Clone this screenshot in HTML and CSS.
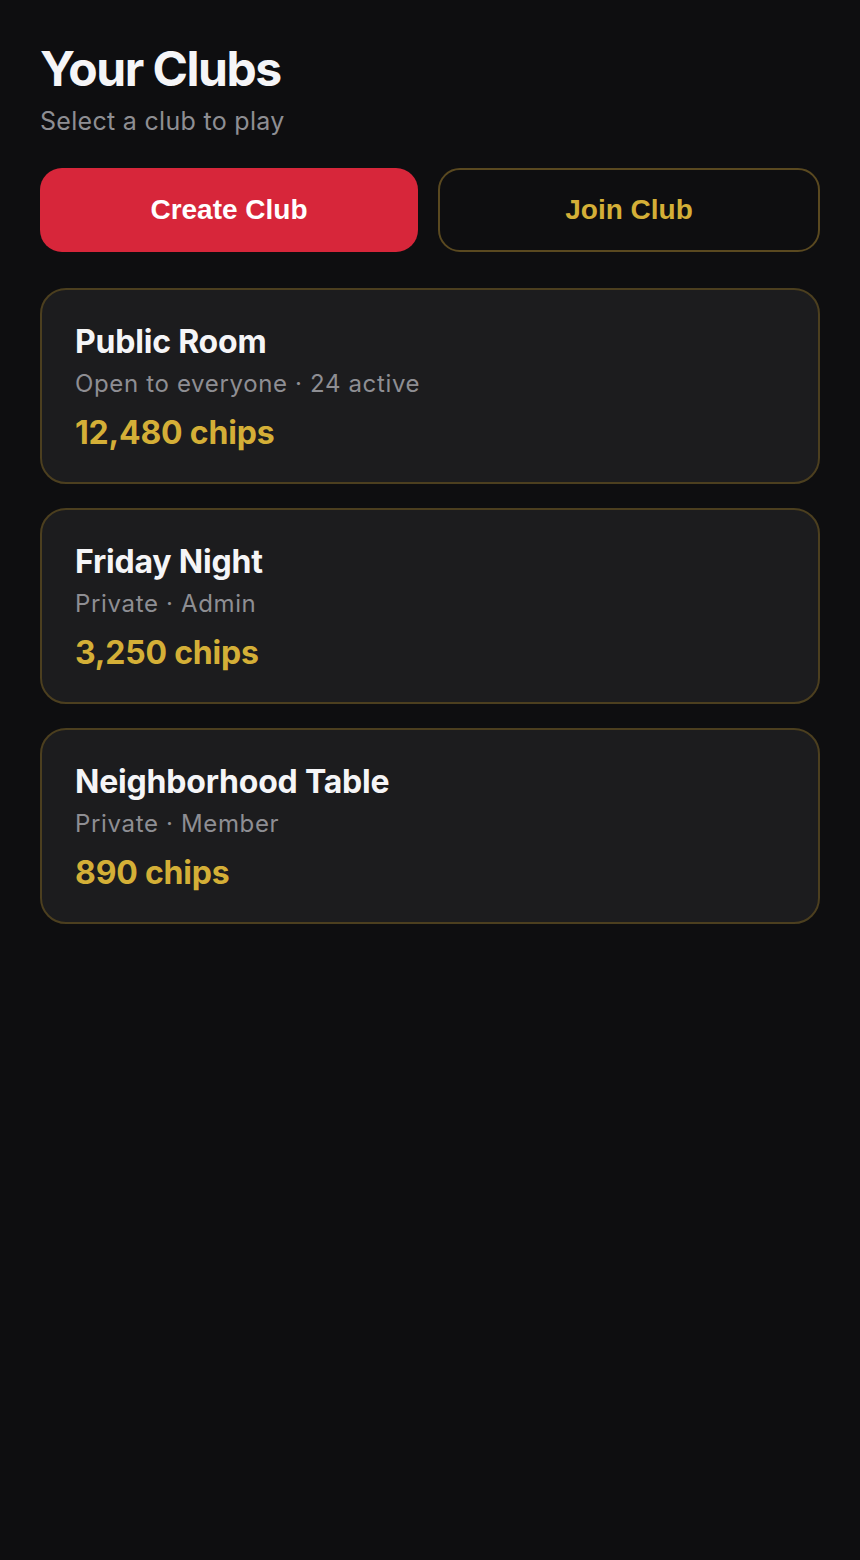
FILE: index.html
```html
<!DOCTYPE html>
<html>

<head>
    <title>Your Clubs</title>
    <meta name="viewport" content="width=device-width, initial-scale=1.0">
    <link rel="stylesheet" href="styles.css">
</head>

<body>
    <div class="page">
        <div class="header">
            <h1 class="title">Your Clubs</h1>
            <p class="subtitle">Select a club to play</p>
        </div>

        <div class="actions">
            <button class="btn btn-create">Create Club</button>
            <button class="btn btn-join">Join Club</button>
        </div>

        <div class="club-list">
            <div class="club-card">
                <div class="club-name">Public Room</div>
                <div class="club-meta">Open to everyone · 24 active</div>
                <div class="club-chips">12,480 chips</div>
            </div>
            <div class="club-card">
                <div class="club-name">Friday Night</div>
                <div class="club-meta">Private · Admin</div>
                <div class="club-chips">3,250 chips</div>
            </div>
            <div class="club-card">
                <div class="club-name">Neighborhood Table</div>
                <div class="club-meta">Private · Member</div>
                <div class="club-chips">890 chips</div>
            </div>
        </div>
    </div>
</body>

</html>
```

FILE: styles.css
```css
/* Basic styling */
body {
    margin: 0;
    background-color: #0e0e10;
    font-family: Inter, "Noto Sans", sans-serif;
    color: #f5f5f7;
}

.page {
    padding: 40px;
}

/* Header */
.title {
    margin: 0;
    font-size: 48px;
    line-height: 58px;
    font-weight: 700;
    letter-spacing: -1.5px;
}

.subtitle {
    margin: 7px 0 0;
    font-size: 25px;
    line-height: 32px;
    letter-spacing: 0.3px;
    color: #8e8e93;
}

/* Buttons */
.actions {
    display: flex;
    gap: 20px;
    margin-top: 31px;
}

.btn {
    flex: 1;
    box-sizing: content-box;
    height: 84px;
    padding: 0;
    border: none;
    border-radius: 22px;
    font-family: "Liberation Sans", Arial, sans-serif;
    font-size: 28px;
    font-weight: 700;
    cursor: pointer;
}

.btn-create {
    background-color: #d7263a;
    color: #fff;
}

.btn-join {
    height: 80px;
    background-color: transparent;
    border: 2px solid #5a4920;
    color: #d4af37;
}

/* Club cards */
.club-list {
    display: flex;
    flex-direction: column;
    gap: 24px;
    margin-top: 36px;
}

.club-card {
    background-color: #1c1c1e;
    border: 2px solid #4c3f1f;
    border-radius: 26px;
    padding: 32px 33px 29px;
}

.club-name {
    font-size: 32px;
    line-height: 40px;
    font-weight: 700;
    letter-spacing: -0.2px;
}

.club-meta {
    margin-top: 6px;
    font-size: 24px;
    line-height: 32px;
    letter-spacing: 0.65px;
    color: #8e8e93;
}

.club-chips {
    margin-top: 13px;
    font-size: 32px;
    line-height: 40px;
    font-weight: 700;
    letter-spacing: -0.2px;
    color: #d4af37;
}
```
